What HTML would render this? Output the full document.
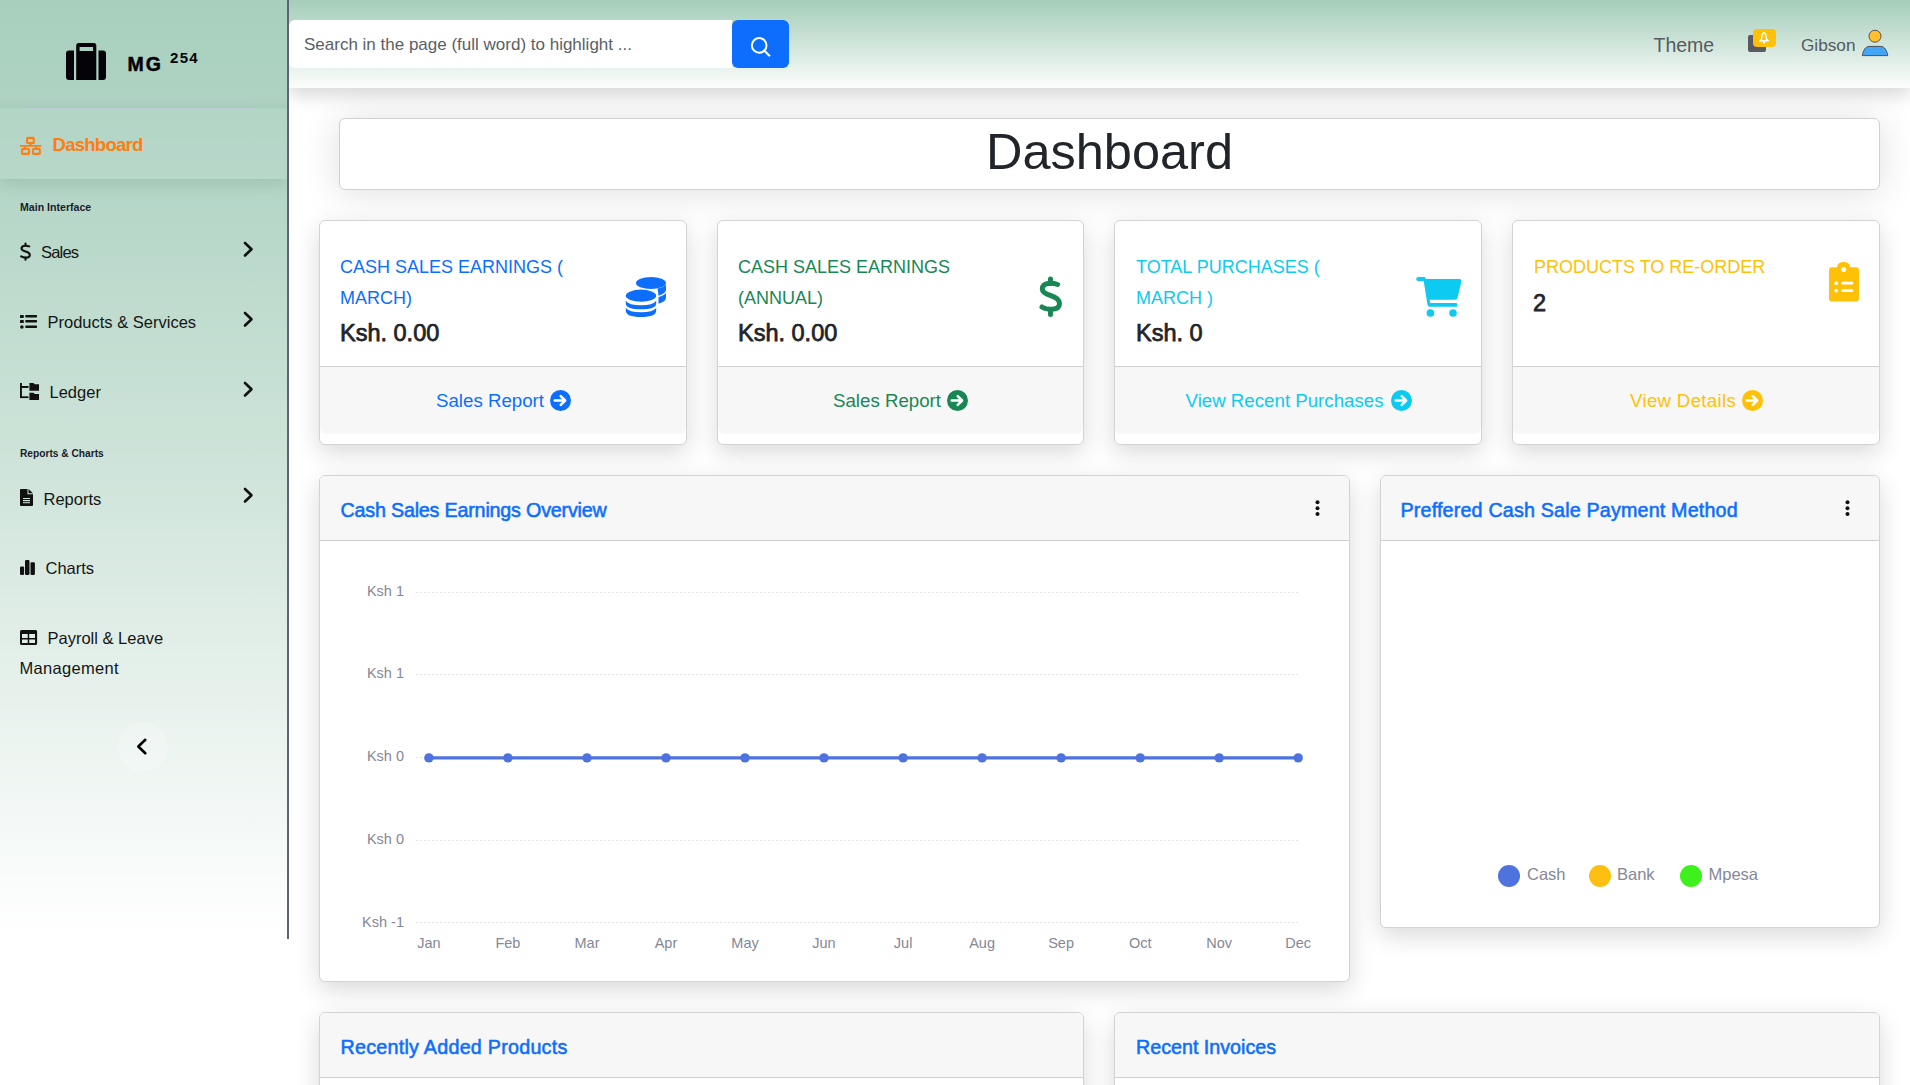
<!DOCTYPE html>
<html><head><meta charset="utf-8">
<style>
*{box-sizing:border-box;margin:0;padding:0}
html,body{width:1910px;height:1085px;overflow:hidden;background:#fff;font-family:"Liberation Sans",sans-serif;color:#212529}
.a{position:absolute}
.t{position:absolute;white-space:nowrap;line-height:1}
#sb{z-index:0;left:0;top:0;width:289px;height:939px;background:linear-gradient(to bottom,#a8cfbd 0%,#b4d6c7 20%,#cfe4da 50%,#e8f2ed 75%,#fff 100%);border-right:2px solid #5f6570}
#dashitem{clip-path:inset(0 0 -30px 0);left:0;top:109px;width:287px;height:70px;background:rgba(255,255,255,.06);box-shadow:0 6px 14px rgba(0,40,20,.10)}
.nav{font-size:16.5px;color:#151515}
.hd{font-size:10.2px;font-weight:700;color:#1b1b2b}
#tb{clip-path:inset(0 -40px -40px 0);left:289px;top:0;width:1621px;height:88px;background:linear-gradient(to bottom,#a4cdb9 0%,#fcfdfc 100%);box-shadow:0 .5rem 1rem rgba(0,0,0,.15)}
.card{position:absolute;background:#fff;border:1px solid #d3d3d3;border-radius:6px;box-shadow:0 .5rem 1.5rem rgba(0,0,0,.15);overflow:hidden}
.ftr{position:absolute;left:0;right:0;background:#f7f7f7;border-top:1px solid #cfcfcf;border-radius:0 0 6px 6px}
.chd{position:absolute;left:0;right:0;top:0;height:65px;background:#f7f7f7;border-bottom:1px solid #cfcfcf}
.ttl{font-size:18px;line-height:31px;position:absolute;white-space:nowrap}
.val{font-size:23.5px;font-weight:400;color:#212529;-webkit-text-stroke:0.75px #212529}
.flink{font-size:18.7px}
.ctitle{font-size:19.7px;font-weight:400;color:#0d6efd;-webkit-text-stroke:0.55px #0d6efd}
.ylab{font-size:14.5px;color:#858796;text-align:right;width:60px}
.xlab{font-size:14.5px;color:#858796;text-align:center;width:50px}
</style></head><body>

<!-- SIDEBAR -->
<div id="sb" class="a"></div>
<div id="dashitem" class="a"></div>
<div class="a" style="left:0;top:96px;width:287px;height:12px;background:linear-gradient(to bottom,rgba(0,40,20,0),rgba(0,40,20,.035))"></div><div class="a" style="left:28px;top:108px;width:227px;height:1px;background:#bccbd6"></div>
<!-- briefcase logo -->
<svg class="a" style="left:66px;top:43px" width="40" height="37" viewBox="0 0 40 37">
<path d="M3 7.6 H8 V37 H3 Q0 37 0 34 V10.6 Q0 7.6 3 7.6 Z" fill="#050308"/>
<path d="M32.5 7.6 H37 Q40 7.6 40 10.6 V34 Q40 37 37 37 H32.5 Z" fill="#050308"/>
<path d="M10.2 2.6 Q10.2 0 12.8 0 H27.7 Q30.3 0 30.3 2.6 V37 H10.2 Z M13.6 3.9 V7.9 H27.1 V3.9 Z" fill="#050308" fill-rule="evenodd"/>
</svg>
<div class="t" style="left:127.5px;top:55.3px;font-size:19.5px;font-weight:700;letter-spacing:2px;color:#050308;-webkit-text-stroke:0.5px #050308">MG</div>
<div class="t" style="left:170px;top:50.3px;font-size:15px;font-weight:700;letter-spacing:1.3px;color:#050308">254</div>

<!-- dashboard item -->
<svg class="a" style="left:19px;top:136px" width="24" height="20" viewBox="0 0 24 20">
<g fill="none" stroke="#fd7e14" stroke-width="2.1">
<rect x="8.1" y="1.9" width="6.7" height="5.1" rx="0.8"/>
<rect x="3" y="13" width="7" height="4.9" rx="0.8"/>
<rect x="13.9" y="13" width="7" height="4.9" rx="0.8"/>
</g>
<g fill="#fd7e14"><rect x="10.2" y="7" width="2.4" height="2.2"/><rect x="0.8" y="8.9" width="21.7" height="1.9" rx=".9"/><rect x="4.8" y="10.6" width="2.3" height="1.5"/><rect x="15.9" y="10.6" width="2.3" height="1.5"/></g>
</svg>
<div class="t" style="left:52.5px;top:136.3px;font-size:18.5px;letter-spacing:-0.72px;font-weight:700;color:#fd7e14">Dashboard</div>

<div class="t hd" style="left:20px;top:202px;font-size:10.6px">Main Interface</div>

<!-- Sales -->
<svg class="a" style="left:19px;top:242px" width="13" height="19" viewBox="0 0 13 19"><path d="M10.2 4.4 Q8.2 3.6 6.2 3.7 Q2.5 3.9 2.5 6.5 Q2.5 8.4 6.6 9.5 Q10.8 10.7 10.8 13 Q10.8 15.6 6.7 15.6 Q4 15.6 2.2 14.4" fill="none" stroke="#111" stroke-width="2.1" stroke-linecap="round"/><path d="M6.5 1.5 V3.6 M6.5 15.8 V17.8" stroke="#111" stroke-width="2.1" stroke-linecap="round"/></svg>
<div class="t nav" style="left:41px;top:244.2px;letter-spacing:-0.8px">Sales</div>
<!-- Products -->
<svg class="a" style="left:20px;top:315px" width="18" height="14" viewBox="0 0 18 14">
<g fill="#111"><rect x="0" y="0" width="3.8" height="2.9" rx=".6"/><rect x="0" y="4.9" width="3.8" height="3.1" rx=".6"/><circle cx="1.9" cy="12" r="1.8"/>
<rect x="5.2" y="0.1" width="11.9" height="2.5" rx="1"/><rect x="5.2" y="5.1" width="11.9" height="2.5" rx="1"/><rect x="5.2" y="10.6" width="11.9" height="2.5" rx="1"/></g>
</svg>
<div class="t nav" style="left:47.5px;top:314px">Products &amp; Services</div>
<!-- Ledger -->
<svg class="a" style="left:20px;top:383px" width="20" height="17" viewBox="0 0 20 17">
<g fill="#111"><rect x="0" y="0" width="1.9" height="15"/><rect x="0" y="3" width="8.5" height="2"/><rect x="0" y="13.3" width="8.5" height="1.8"/>
<path d="M9.4 0 H13.5 L14.8 1.3 H19 V7.8 H9.4 Z"/><path d="M9.4 9.7 H13.5 L14.8 11 H19 V16.9 H9.4 Z"/></g>
</svg>
<div class="t nav" style="left:49.5px;top:383.6px">Ledger</div>

<div class="t hd" style="left:20px;top:448.7px">Reports &amp; Charts</div>
<!-- Reports -->
<svg class="a" style="left:20px;top:489px" width="14" height="17" viewBox="0 0 14 17">
<path d="M1 0 H7.5 V5.3 H13 V16 Q13 17 12 17 H1 Q0 17 0 16 V1 Q0 0 1 0 Z M8.5 0 L13 4.3 H8.5 Z M3 9 V10.1 H10 V9 Z M3 11.1 V12.2 H10 V11.1 Z M3 13.2 V14.3 H10 V13.2 Z" fill="#111" fill-rule="evenodd"/>
</svg>
<div class="t nav" style="left:43.5px;top:490.5px">Reports</div>
<!-- Charts -->
<svg class="a" style="left:20px;top:559px" width="16" height="17" viewBox="0 0 16 17">
<g fill="#111"><rect x="0" y="7.4" width="4.1" height="8.6" rx="1.2"/><rect x="5" y="0.9" width="4.5" height="15.1" rx="1.2"/><rect x="10.5" y="3.2" width="4.4" height="12.8" rx="1.2"/></g>
</svg>
<div class="t nav" style="left:45.5px;top:560px">Charts</div>
<!-- Payroll -->
<svg class="a" style="left:20px;top:629.9px" width="18" height="16" viewBox="0 0 18 16">
<path d="M1.5 0 H15.6 Q17.1 0 17.1 1.5 V13.6 Q17.1 15.1 15.6 15.1 H1.5 Q0 15.1 0 13.6 V1.5 Q0 0 1.5 0 Z M2 4 V8.1 H7.7 V4 Z M9.2 4 V8.1 H15 V4 Z M2 9.5 V13.1 H7.7 V9.5 Z M9.2 9.5 V13.1 H15 V9.5 Z" fill="#111" fill-rule="evenodd"/>
</svg>
<div class="t nav" style="left:47.5px;top:630px">Payroll &amp; Leave</div>
<div class="t nav" style="left:19.5px;top:660px;letter-spacing:0.3px">Management</div>

<!-- chevrons -->
<svg class="a" style="left:242px;top:241px" width="13" height="17" viewBox="0 0 13 17"><path d="M3 2 L9.5 8.2 L3 14.5" fill="none" stroke="#111" stroke-width="2.6" stroke-linecap="round" stroke-linejoin="round"/></svg>
<svg class="a" style="left:242px;top:311px" width="13" height="17" viewBox="0 0 13 17"><path d="M3 2 L9.5 8.2 L3 14.5" fill="none" stroke="#111" stroke-width="2.6" stroke-linecap="round" stroke-linejoin="round"/></svg>
<svg class="a" style="left:242px;top:381px" width="13" height="17" viewBox="0 0 13 17"><path d="M3 2 L9.5 8.2 L3 14.5" fill="none" stroke="#111" stroke-width="2.6" stroke-linecap="round" stroke-linejoin="round"/></svg>
<svg class="a" style="left:242px;top:487px" width="13" height="17" viewBox="0 0 13 17"><path d="M3 2 L9.5 8.2 L3 14.5" fill="none" stroke="#111" stroke-width="2.6" stroke-linecap="round" stroke-linejoin="round"/></svg>

<!-- collapse button -->
<div class="a" style="left:118px;top:722px;width:50px;height:50px;border-radius:50%;background:rgba(255,255,255,.22)"></div>
<svg class="a" style="left:134px;top:736px" width="16" height="21" viewBox="0 0 16 21"><path d="M11.3 3.8 L4.3 10.5 L11.3 17.3" fill="none" stroke="#000" stroke-width="2.6" stroke-linecap="round" stroke-linejoin="round"/></svg>

<!-- TOPBAR -->
<div id="tb" class="a"></div>
<div class="a" style="left:289px;top:20px;width:443px;height:48px;background:#fff;border-radius:6px 0 0 6px"></div>
<div class="t" style="left:304px;top:35.6px;font-size:17px;color:#595f66">Search in the page (full word) to highlight ...</div>
<div class="a" style="left:732px;top:20px;width:57px;height:48px;background:#0d6efd;border-radius:6px"></div>
<svg class="a" style="left:748px;top:35px" width="24" height="24" viewBox="0 0 24 24"><circle cx="11.2" cy="10.4" r="7.3" fill="none" stroke="#fff" stroke-width="2"/><path d="M16.2 15.6 L21.2 20.5" stroke="#fff" stroke-width="2.1" stroke-linecap="square"/></svg>

<div class="t" style="left:1653.5px;top:35.5px;font-size:19.5px;color:#555a60">Theme</div>
<div class="a" style="left:1748px;top:35px;width:18px;height:17px;background:#5a5a62;border-radius:2px"></div>
<div class="a" style="left:1753px;top:29px;width:23px;height:18px;background:#ffc107;border-radius:4px"></div>
<svg class="a" style="left:1757px;top:31px" width="15" height="14" viewBox="0 0 15 14"><path d="M7 1.6 Q5.3 2.3 4.9 4.6 L4.5 8.2 L2.6 9.7 H11.4 L9.5 8.2 L9.1 4.6 Q8.7 2.3 7 1.6 Z" fill="none" stroke="#fff" stroke-width="1.4" stroke-linejoin="round"/><circle cx="7" cy="11.4" r="1.2" fill="#fff"/></svg>
<div class="t" style="left:1801px;top:36.5px;font-size:17.2px;color:#555a60">Gibson</div>
<svg class="a" style="left:1860px;top:28px" width="30" height="30" viewBox="0 0 30 30">
<circle cx="15" cy="8.2" r="6" fill="#ffbf2e" stroke="#5a5060" stroke-width="1"/>
<path d="M2.4 27.6 C3 22.3 5.6 18.4 9.2 18.4 H20.8 C24.4 18.4 27 22.3 27.7 27.6 Z" fill="#42a5f5" stroke="#4a5060" stroke-width="1"/>
</svg>

<!-- HEADER BOX -->
<div class="a" style="left:339px;top:118px;width:1541px;height:72px;background:#fff;border:1px solid #d0d0d0;border-radius:6px;box-shadow:0 .15rem 2.2rem 0 rgba(58,59,69,.17)"></div>
<div class="t" style="left:339px;width:1541px;text-align:center;top:126.5px;font-size:50.5px;color:#212529">Dashboard</div>

<!-- STAT CARDS -->
<div class="card" style="left:319px;top:220px;width:368px;height:225px"><div class="ftr" style="top:145px;height:68px"></div></div>
<div class="card" style="left:717px;top:220px;width:367px;height:225px"><div class="ftr" style="top:145px;height:68px"></div></div>
<div class="card" style="left:1114px;top:220px;width:368px;height:225px"><div class="ftr" style="top:145px;height:68px"></div></div>
<div class="card" style="left:1512px;top:220px;width:368px;height:225px"><div class="ftr" style="top:145px;height:68px"></div></div>

<div class="ttl" style="left:340px;top:252px;color:#0d6efd">CASH SALES EARNINGS (<br>MARCH)</div>
<div class="t val" style="left:340px;top:321.5px">Ksh. 0.00</div>
<div class="ttl" style="left:738px;top:252px;color:#198754">CASH SALES EARNINGS<br>(ANNUAL)</div>
<div class="t val" style="left:738px;top:321.5px">Ksh. 0.00</div>
<div class="ttl" style="left:1136px;top:252px;color:#0dcaf0">TOTAL PURCHASES (<br>MARCH )</div>
<div class="t val" style="left:1136px;top:321.5px">Ksh. 0</div>
<div class="ttl" style="left:1534px;top:252px;color:#ffc107">PRODUCTS TO RE-ORDER</div>
<div class="t val" style="left:1533px;top:291.5px">2</div>

<!-- coins -->
<svg class="a" style="left:625px;top:276px" width="42" height="42" viewBox="0 0 42 42" fill="#0d6efd">
<ellipse cx="26" cy="7" rx="15" ry="6.1"/>
<path d="M32.5 12.5 Q39 11.3 41 8.5 V13.5 Q41 17.5 33.5 19.7 Q33 15 32.5 12.5 Z"/>
<path d="M33.5 21 Q39 19.5 41 17 V21.5 Q41 25.8 33.5 27.7 Z"/>
<ellipse cx="16" cy="19.7" rx="15.2" ry="6.1"/>
<path d="M0.8 24.8 Q4 29.3 16 29.3 Q28 29.3 31.2 24.8 V27.2 Q31.2 33.2 16 33.2 Q0.8 33.2 0.8 27.2 Z"/>
<path d="M0.8 32 Q4 36.2 16 36.2 Q28 36.2 31.2 32 V34.5 Q31.2 41 16 41 Q0.8 41 0.8 34.5 Z"/>
</svg>
<!-- dollar -->
<svg class="a" style="left:1038px;top:276px" width="26" height="42" viewBox="0 0 26 42">
<path d="M19.6 8.5 Q15.5 7 11.5 7.3 Q4.3 8 4.3 13 Q4.3 17 12.5 19.5 Q21.5 22.3 21.5 27.5 Q21.5 33.3 13 33.3 Q7.5 33.3 4 31" fill="none" stroke="#198754" stroke-width="5" stroke-linecap="round"/>
<path d="M12.5 3 V7.5 M12.5 33.5 V38.5" stroke="#198754" stroke-width="5" stroke-linecap="round"/>
</svg>
<!-- cart -->
<svg class="a" style="left:1415px;top:276px" width="48" height="42" viewBox="0 0 48 42" fill="#0dcaf0">
<path d="M3.4 1.1 H10 L10.8 3 H44.5 Q47 3.3 46.3 6 L42.5 21.7 Q42 23.7 40 23.7 H14.7 L15.2 27 H41.5 Q43 27.7 42 30.8 H14.7 Q13 30.8 12.5 28.8 L8.7 5.1 H3.4 Q1.2 5.1 1.2 3.1 Q1.2 1.1 3.4 1.1 Z"/>
<circle cx="15.4" cy="37" r="3.8"/><circle cx="38" cy="37" r="3.8"/>
</svg>
<!-- clipboard -->
<svg class="a" style="left:1829px;top:261px" width="31" height="42" viewBox="0 0 31 42">
<path d="M3 6.2 H8 Q8.8 1 14.6 1 Q20.4 1 21.3 6.2 H27 Q30 6.2 30 9.2 V37.6 Q30 40.6 27 40.6 H3 Q0 40.6 0 37.6 V9.2 Q0 6.2 3 6.2 Z" fill="#ffc107"/>
<circle cx="14.7" cy="8.5" r="2.5" fill="#fff"/>
<circle cx="7.2" cy="22.2" r="1.9" fill="#fff"/><circle cx="7.2" cy="29.6" r="1.9" fill="#fff"/>
<rect x="12.3" y="20.8" width="12" height="2.8" rx="1.4" fill="#fff"/><rect x="12.3" y="28.2" width="12" height="2.8" rx="1.4" fill="#fff"/>
</svg>

<!-- footer links -->
<div class="t flink" style="left:436px;top:392px;color:#0d6efd">Sales Report</div>
<svg class="a" style="left:550px;top:390px" width="21" height="21" viewBox="0 0 20 20"><circle cx="10" cy="10" r="10" fill="#0d6efd"/><path d="M4.5 10 H14 M10.2 5.8 L14.4 10 L10.2 14.2" fill="none" stroke="#fff" stroke-width="2.4" stroke-linecap="round" stroke-linejoin="round"/></svg>
<div class="t flink" style="left:833px;top:392px;color:#198754">Sales Report</div>
<svg class="a" style="left:947px;top:390px" width="21" height="21" viewBox="0 0 20 20"><circle cx="10" cy="10" r="10" fill="#198754"/><path d="M4.5 10 H14 M10.2 5.8 L14.4 10 L10.2 14.2" fill="none" stroke="#fff" stroke-width="2.4" stroke-linecap="round" stroke-linejoin="round"/></svg>
<div class="t flink" style="left:1185.5px;top:392px;color:#0dcaf0">View Recent Purchases</div>
<svg class="a" style="left:1391px;top:390px" width="21" height="21" viewBox="0 0 20 20"><circle cx="10" cy="10" r="10" fill="#0dcaf0"/><path d="M4.5 10 H14 M10.2 5.8 L14.4 10 L10.2 14.2" fill="none" stroke="#fff" stroke-width="2.4" stroke-linecap="round" stroke-linejoin="round"/></svg>
<div class="t flink" style="left:1630px;top:392px;color:#ffc107;letter-spacing:.3px">View Details</div>
<svg class="a" style="left:1742px;top:390px" width="21" height="21" viewBox="0 0 20 20"><circle cx="10" cy="10" r="10" fill="#ffc107"/><path d="M4.5 10 H14 M10.2 5.8 L14.4 10 L10.2 14.2" fill="none" stroke="#fff" stroke-width="2.4" stroke-linecap="round" stroke-linejoin="round"/></svg>

<!-- CHART CARD -->
<div class="card" style="left:319px;top:475px;width:1031px;height:507px"><div class="chd"></div></div>
<div class="t ctitle" style="left:340.5px;top:500.8px;letter-spacing:-0.19px">Cash Sales Earnings Overview</div>
<svg class="a" style="left:1313px;top:500px" width="9" height="17" viewBox="0 0 9 17"><g fill="#111"><circle cx="4.5" cy="2.3" r="2"/><circle cx="4.5" cy="8.2" r="2"/><circle cx="4.5" cy="14" r="2"/></g></svg>
<svg class="a" style="left:0;top:0" width="1910" height="1085" viewBox="0 0 1910 1085">
<line x1="416" y1="592.5" x2="1298" y2="592.5" stroke="#e3e4ea" stroke-width="1" stroke-dasharray="2 2"/>
<line x1="416" y1="674.5" x2="1298" y2="674.5" stroke="#e3e4ea" stroke-width="1" stroke-dasharray="2 2"/>
<line x1="416" y1="757.5" x2="1298" y2="757.5" stroke="#e3e4ea" stroke-width="1" stroke-dasharray="2 2"/>
<line x1="416" y1="840.5" x2="1298" y2="840.5" stroke="#e3e4ea" stroke-width="1" stroke-dasharray="2 2"/>
<line x1="416" y1="922.5" x2="1298" y2="922.5" stroke="#e3e4ea" stroke-width="1" stroke-dasharray="2 2"/>
<line x1="428.9" y1="757.9" x2="1298.2" y2="757.9" stroke="#4e73df" stroke-width="3.2"/>
<circle cx="428.9" cy="757.9" r="4.7" fill="#4e73df"/>
<circle cx="507.9" cy="757.9" r="4.7" fill="#4e73df"/>
<circle cx="587.0" cy="757.9" r="4.7" fill="#4e73df"/>
<circle cx="666.0" cy="757.9" r="4.7" fill="#4e73df"/>
<circle cx="745.0" cy="757.9" r="4.7" fill="#4e73df"/>
<circle cx="824.0" cy="757.9" r="4.7" fill="#4e73df"/>
<circle cx="903.1" cy="757.9" r="4.7" fill="#4e73df"/>
<circle cx="982.1" cy="757.9" r="4.7" fill="#4e73df"/>
<circle cx="1061.1" cy="757.9" r="4.7" fill="#4e73df"/>
<circle cx="1140.2" cy="757.9" r="4.7" fill="#4e73df"/>
<circle cx="1219.2" cy="757.9" r="4.7" fill="#4e73df"/>
<circle cx="1298.2" cy="757.9" r="4.7" fill="#4e73df"/>
</svg>
<div class="t ylab" style="left:344px;top:583.8px">Ksh 1</div>
<div class="t ylab" style="left:344px;top:666.4px">Ksh 1</div>
<div class="t ylab" style="left:344px;top:749.1px">Ksh 0</div>
<div class="t ylab" style="left:344px;top:831.8px">Ksh 0</div>
<div class="t ylab" style="left:344px;top:914.5px">Ksh -1</div>
<div class="t xlab" style="left:403.9px;top:935.7px">Jan</div>
<div class="t xlab" style="left:482.9px;top:935.7px">Feb</div>
<div class="t xlab" style="left:562.0px;top:935.7px">Mar</div>
<div class="t xlab" style="left:641.0px;top:935.7px">Apr</div>
<div class="t xlab" style="left:720.0px;top:935.7px">May</div>
<div class="t xlab" style="left:799.0px;top:935.7px">Jun</div>
<div class="t xlab" style="left:878.1px;top:935.7px">Jul</div>
<div class="t xlab" style="left:957.1px;top:935.7px">Aug</div>
<div class="t xlab" style="left:1036.1px;top:935.7px">Sep</div>
<div class="t xlab" style="left:1115.2px;top:935.7px">Oct</div>
<div class="t xlab" style="left:1194.2px;top:935.7px">Nov</div>
<div class="t xlab" style="left:1273.2px;top:935.7px">Dec</div>

<!-- PIE CARD -->
<div class="card" style="left:1380px;top:475px;width:500px;height:453px"><div class="chd"></div></div>
<div class="t ctitle" style="left:1400.5px;top:500.8px;letter-spacing:0.18px">Preffered Cash Sale Payment Method</div>
<svg class="a" style="left:1843px;top:500px" width="9" height="17" viewBox="0 0 9 17"><g fill="#111"><circle cx="4.5" cy="2.3" r="2"/><circle cx="4.5" cy="8.2" r="2"/><circle cx="4.5" cy="14" r="2"/></g></svg>
<div class="a" style="left:1498px;top:865px;width:22px;height:22px;border-radius:50%;background:#4e73df"></div>
<div class="t" style="left:1527px;top:865.8px;font-size:16.5px;color:#858796">Cash</div>
<div class="a" style="left:1588.5px;top:865px;width:22px;height:22px;border-radius:50%;background:#ffbf10"></div>
<div class="t" style="left:1617px;top:865.8px;font-size:16.5px;color:#858796">Bank</div>
<div class="a" style="left:1679.5px;top:865px;width:22px;height:22px;border-radius:50%;background:#3ef01c"></div>
<div class="t" style="left:1708.5px;top:865.8px;font-size:16.5px;color:#858796">Mpesa</div>

<!-- BOTTOM CARDS -->
<div class="card" style="left:319px;top:1012px;width:765px;height:200px"><div class="chd"></div></div>
<div class="t ctitle" style="left:340.5px;top:1037.5px;letter-spacing:0.26px">Recently Added Products</div>
<div class="card" style="left:1114px;top:1012px;width:766px;height:200px"><div class="chd"></div></div>
<div class="t ctitle" style="left:1136px;top:1037.5px">Recent Invoices</div>

</body></html>
